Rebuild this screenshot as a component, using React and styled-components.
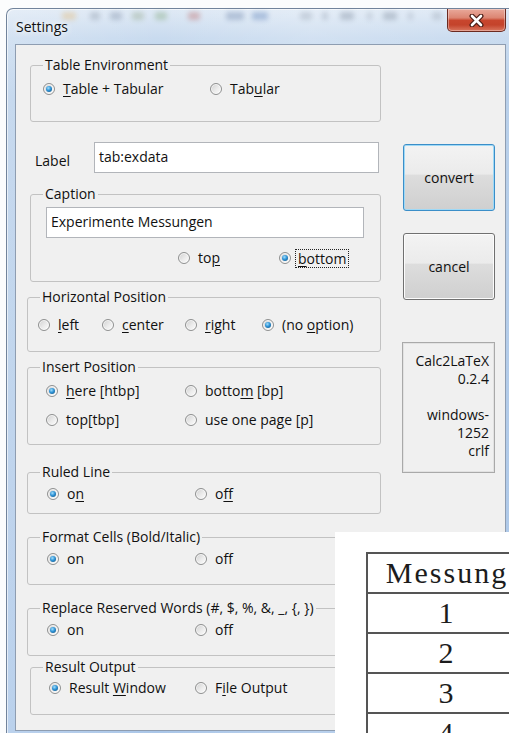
import React from 'react';
import styled, { createGlobalStyle } from 'styled-components';

const GlobalStyle = createGlobalStyle`
  html, body {
    margin: 0;
    padding: 0;
    background: #fbfcfd;
    overflow: hidden;
  }
  body {
    position: relative;
    width: 509px;
    height: 733px;
    font-family: "Open Sans", "Noto Sans", sans-serif;
    font-size: 14px;
    color: #111;
  }
`;

// blurred toolbar shapes seen through the glass caption
const haze = [
  { x: 47, w: 14, c: '#e3bf86' },
  { x: 75, w: 10, c: '#98a4b3' },
  { x: 95, w: 12, c: '#8c9bb0' },
  { x: 117, w: 12, c: '#9db098' },
  { x: 140, w: 12, c: '#8caf8a' },
  { x: 173, w: 12, c: '#c07878' },
  { x: 211, w: 18, c: '#7c92b4' },
  { x: 237, w: 16, c: '#6c8dc0' },
  { x: 285, w: 12, c: '#a6b1bf' },
  { x: 307, w: 6, c: '#a0abba' },
  { x: 325, w: 14, c: '#8b98a9' },
  { x: 352, w: 5, c: '#a6b1bf' },
  { x: 368, w: 14, c: '#8b98a9' },
  { x: 393, w: 5, c: '#a6b1bf' },
  { x: 417, w: 10, c: '#a6b1bf' },
];

const Window = styled.div`
  box-sizing: border-box;
  width: 509px;
  height: 725px;
  margin: 8px 0 0 6px;
  padding: 0 8px;
  border: 1px solid #71839b;
  border-bottom: 0;
  border-radius: 7px 7px 0 0;
  background:
    linear-gradient(90deg, rgba(255, 255, 255, 0.2), rgba(255, 255, 255, 0) 30%, rgba(255, 255, 255, 0.18) 60%, rgba(255, 255, 255, 0) 100%),
    linear-gradient(180deg, #dfe9f5 0%, #c9dbef 4%, #b9d0ea 12%, #aac6e8 100%);
  box-shadow: inset 1px 1px 0 rgba(255, 255, 255, 0.6);
`;

const TitleBar = styled.div`
  position: relative;
  height: 35px;
  display: flex;
  align-items: center;
  padding-left: 1px;
`;

const Haze = styled.span`
  position: absolute;
  top: 3px;
  left: ${(p) => p.$x}px;
  width: ${(p) => p.$w}px;
  height: 8px;
  border-radius: 2px;
  background: ${(p) => p.$c};
  filter: blur(2.5px);
  opacity: 0.45;
`;

const Title = styled.span`
  position: relative;
  font-size: 14px;
  color: #111;
  text-shadow: 0 0 6px #fff, 0 0 10px rgba(255, 255, 255, 0.8);
`;

const CloseButton = styled.div`
  position: relative;
  margin-left: auto;
  align-self: flex-start;
  box-sizing: border-box;
  width: 59px;
  height: 23px;
  border: 1px solid #6b2a20;
  border-top: 0;
  border-radius: 0 0 5px 5px;
  background: linear-gradient(180deg, #e9a99b 0%, #dc8572 40%, #c8462e 52%, #c4432b 72%, #d9765f 100%);
  box-shadow: inset 0 0 0 1px rgba(255, 255, 255, 0.35);
  display: flex;
  align-items: center;
  justify-content: center;
`;

const Client = styled.div`
  box-sizing: border-box;
  height: 687px;
  border: 1px solid #8e9db1;
  background: #f0f0f0;
  display: flex;
  padding: 12px 0 0 11px;
`;

const LeftCol = styled.div`
  width: 354px;
  flex: none;
`;

const RightCol = styled.div`
  width: 93px;
  flex: none;
  margin-left: 21px;
  padding-top: 87px;
`;

const Group = styled.fieldset`
  box-sizing: border-box;
  height: ${(p) => p.$h}px;
  margin: ${(p) => p.$mt || 0}px 0 0 ${(p) => p.$ml || 0}px;
  padding: ${(p) => p.$pt || 0}px 0 0 0;
  border: 1px solid #c2c2c2;
  border-radius: 3px;
  min-width: 0;
`;

const Legend = styled.legend`
  margin-left: 12px;
  padding: 0 2px;
  font-size: 14px;
  line-height: 16px;
`;

const RadioRow = styled.div`
  display: grid;
  grid-template-columns: ${(p) => p.$cols};
  row-gap: ${(p) => p.$gap || 0}px;
  padding-left: ${(p) => p.$pl}px;
  margin-top: ${(p) => p.$mt || 0}px;
`;

const Option = styled.div`
  display: flex;
  align-items: center;
  height: 20px;
  line-height: 20px;
  white-space: nowrap;
`;

const Dot = styled.span`
  position: relative;
  box-sizing: border-box;
  flex: none;
  width: 12px;
  height: 12px;
  margin-right: 8px;
  border-radius: 50%;
  border: 1px solid #8f9090;
  background: linear-gradient(135deg, #cfcfcf 0%, #ececec 55%, #fdfdfd 100%);
  box-shadow: inset 0 0 0 1px rgba(255, 255, 255, 0.7);

  &::after {
    content: '';
    display: ${(p) => (p.$on ? 'block' : 'none')};
    position: absolute;
    left: 2px;
    top: 2px;
    width: 6px;
    height: 6px;
    border-radius: 50%;
    background: radial-gradient(circle at 40% 35%, #a2defb 0%, #2f93d6 45%, #0b4a77 100%);
  }
`;

const OptText = styled.span`
  ${(p) =>
    p.$focus &&
    `
    outline: 1px dotted #222;
    padding: 0 2px;
    margin-left: -3px;
    line-height: 17px;
  `}
`;

const Key = styled.span`
  text-decoration: underline;
  text-underline-offset: 2px;
`;

const FieldRow = styled.div`
  display: grid;
  grid-template-columns: 59px auto;
  align-items: center;
  margin-top: 20px;
  padding-left: 8px;
`;

const FieldLabel = styled.span`
  padding-top: 6px;
`;

const TextBox = styled.div`
  box-sizing: border-box;
  width: ${(p) => p.$w}px;
  height: 31px;
  margin-left: ${(p) => p.$ml || 0}px;
  padding: 0 4px;
  border: 1px solid #b2b5ba;
  background: #fff;
  line-height: 28px;
`;

const Button = styled.div`
  box-sizing: border-box;
  width: 92px;
  height: 67px;
  margin: ${(p) => p.$mt || 0}px 0 0 1px;
  border: 1px solid ${(p) => (p.$default ? '#3b8ec8' : '#707070')};
  border-radius: 3px;
  background: linear-gradient(180deg, #f3f3f3 0%, #ebebeb 45%, #dddddd 46%, #cfcfcf 100%);
  box-shadow: inset 0 0 0 1px ${(p) => (p.$default ? '#9fd9f6' : '#fcfcfc')};
  display: flex;
  align-items: center;
  justify-content: center;
`;

const Info = styled.div`
  box-sizing: border-box;
  width: 93px;
  height: 131px;
  margin-top: 42px;
  padding: 9px 5px 0 0;
  border: 1px solid #a9a9a9;
  box-shadow: inset 0 0 0 1px #e2e2e2;
  text-align: right;
  line-height: 18px;
`;

const Snapshot = styled.div`
  position: absolute;
  left: 335px;
  top: 532px;
  right: 0;
  bottom: 0;
  padding: 20px 0 0 31px;
  background: #fff;
  overflow: hidden;
`;

const ResultTable = styled.table`
  border-collapse: collapse;
  table-layout: fixed;
  width: 162px;
  font-family: "Liberation Serif", "DejaVu Serif", serif;
  font-size: 30px;
  color: #1c1c1c;

  td {
    height: 38px;
    padding: 0;
    border: 2px solid #555;
    text-align: center;
    line-height: 38px;
    letter-spacing: 2px;
  }
`;

const Radio = ({ on, focus, children }) => (
  <Option>
    <Dot $on={on} />
    <OptText $focus={focus}>{children}</OptText>
  </Option>
);

const CloseGlyph = () => (
  <svg width="17" height="13" viewBox="0 0 17 13">
    <path d="M4 2 L13 11 M13 2 L4 11" stroke="#4b1d15" strokeWidth="5" strokeLinecap="round" />
    <path d="M4 2 L13 11 M13 2 L4 11" stroke="#fff" strokeWidth="2.6" strokeLinecap="round" />
  </svg>
);

export default function App() {
  return (
    <>
      <GlobalStyle />
      <Window>
        <TitleBar>
          {haze.map((h, i) => (
            <Haze key={i} $x={h.x} $w={h.w} $c={h.c} />
          ))}
          <Title>Settings</Title>
          <CloseButton>
            <CloseGlyph />
          </CloseButton>
        </TitleBar>

        <Client>
          <LeftCol>
            <Group $ml={3} $h={65} $pt={6}>
              <Legend>Table Environment</Legend>
              <RadioRow $pl={12} $cols="167px auto">
                <Radio on><Key>T</Key>able + Tabular</Radio>
                <Radio>Tab<Key>u</Key>lar</Radio>
              </RadioRow>
            </Group>

            <FieldRow>
              <FieldLabel>Label</FieldLabel>
              <TextBox $w={285}>tab:exdata</TextBox>
            </FieldRow>

            <Group $mt={13} $ml={3} $h={96} $pt={5}>
              <Legend>Caption</Legend>
              <TextBox $w={318} $ml={15}>Experimente Messungen</TextBox>
              <RadioRow $pl={147} $cols="101px auto" $mt={10}>
                <Radio>to<Key>p</Key></Radio>
                <Radio on focus><Key>b</Key>ottom</Radio>
              </RadioRow>
            </Group>

            <Group $mt={7} $h={63} $pt={10}>
              <Legend>Horizontal Position</Legend>
              <RadioRow $pl={10} $cols="64px 83px 77px auto">
                <Radio><Key>l</Key>eft</Radio>
                <Radio><Key>c</Key>enter</Radio>
                <Radio><Key>r</Key>ight</Radio>
                <Radio on>(no <Key>o</Key>ption)</Radio>
              </RadioRow>
            </Group>

            <Group $mt={7} $h={86} $pt={6}>
              <Legend>Insert Position</Legend>
              <RadioRow $pl={18} $cols="139px auto" $gap={9}>
                <Radio on><Key>h</Key>ere [htbp]</Radio>
                <Radio>botto<Key>m</Key> [bp]</Radio>
                <Radio>top[tbp]</Radio>
                <Radio>use one pa<Key>g</Key>e [p]</Radio>
              </RadioRow>
            </Group>

            <Group $mt={19} $h={50} $pt={4}>
              <Legend>Ruled Line</Legend>
              <RadioRow $pl={19} $cols="148px auto">
                <Radio on>o<Key>n</Key></Radio>
                <Radio>o<Key>f</Key>f</Radio>
              </RadioRow>
            </Group>

            <Group $mt={15} $h={56} $pt={4}>
              <Legend>Format Cells (Bold/Italic)</Legend>
              <RadioRow $pl={19} $cols="148px auto">
                <Radio on>on</Radio>
                <Radio>off</Radio>
              </RadioRow>
            </Group>

            <Group $mt={15} $h={56} $pt={4}>
              <Legend>Replace Reserved Words (#, $, %, &amp;, _, {'{'}, {'}'})</Legend>
              <RadioRow $pl={19} $cols="148px auto">
                <Radio on>on</Radio>
                <Radio>off</Radio>
              </RadioRow>
            </Group>

            <Group $mt={3} $ml={3} $h={56} $pt={3}>
              <Legend>Result Output</Legend>
              <RadioRow $pl={18} $cols="146px auto">
                <Radio on>Result <Key>W</Key>indow</Radio>
                <Radio>F<Key>i</Key>le Output</Radio>
              </RadioRow>
            </Group>
          </LeftCol>

          <RightCol>
            <Button $default>convert</Button>
            <Button $mt={22}>cancel</Button>
            <Info>
              Calc2LaTeX
              <br />0.2.4
              <br />
              <br />windows-
              <br />1252
              <br />crlf
            </Info>
          </RightCol>
        </Client>
      </Window>

      <Snapshot>
        <ResultTable>
          <tbody>
            {['Messung', '1', '2', '3', '4'].map((v) => (
              <tr key={v}>
                <td>{v}</td>
              </tr>
            ))}
          </tbody>
        </ResultTable>
      </Snapshot>
    </>
  );
}
